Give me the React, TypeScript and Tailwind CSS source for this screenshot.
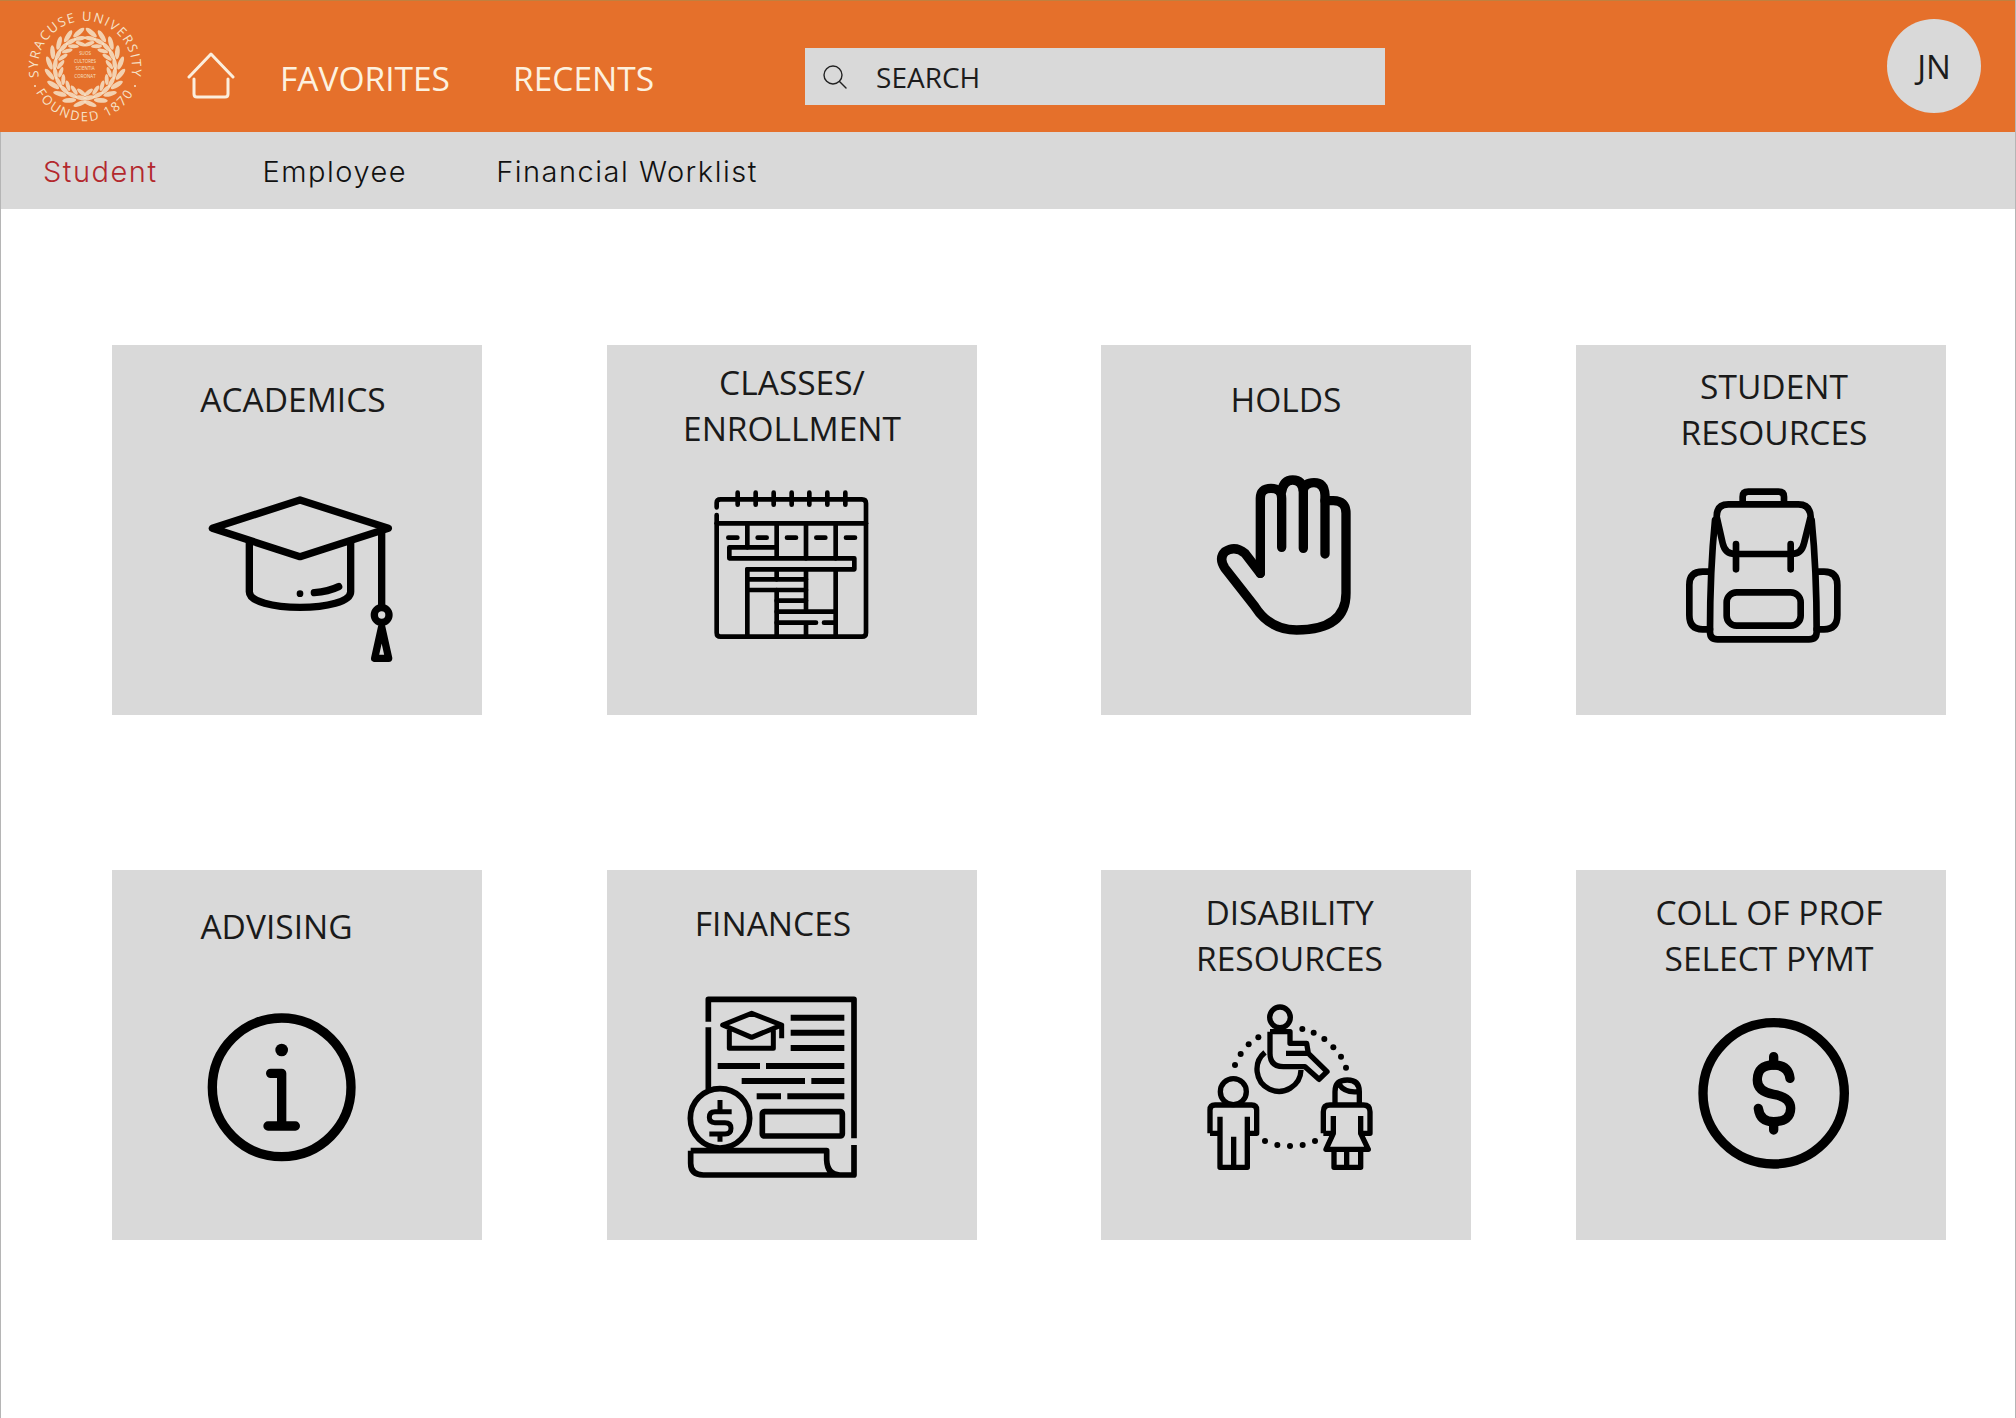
import React from 'react';

const sealLeaves = Array.from({ length: 10 }, (_, i) => 98 + i * 18);

const Seal: React.FC = () => (
  <svg width="160" height="131" viewBox="0 0 160 131" fill="none" className="shrink-0">
    <defs>
      <path id="sealTop" d="M 61.5,107.7 A 47,47 0 1 1 108.5,107.7" />
      <path id="sealBottom" d="M 30.5,77 A 56,56 0 0 0 139.5,77" />
    </defs>
    <text fontFamily="Open Sans, sans-serif" fontSize="13" fill="#f6e2c8" letterSpacing="1.5">
      <textPath href="#sealTop" startOffset="50%" textAnchor="middle">SYRACUSE UNIVERSITY</textPath>
    </text>
    <text fontFamily="Open Sans, sans-serif" fontSize="13" fill="#f6e2c8" letterSpacing="2">
      <textPath href="#sealBottom" startOffset="50%" textAnchor="middle">FOUNDED 1870</textPath>
    </text>
    <circle cx="35" cy="85" r="1" fill="#f6e2c8" />
    <circle cx="135" cy="85" r="1" fill="#f6e2c8" />
    {sealLeaves.map((a) => {
      const rad = (a * Math.PI) / 180;
      const x = 30 * Math.cos(rad);
      const y = 30 * Math.sin(rad);
      return (
        <g key={a} fill="#f6e2c8" fillOpacity="0.85">
          {[1, -1].map((side) => (
            <g key={side}>
              <ellipse cx={85 + side * x * 1.2} cy={67 + y * 1.2} rx="7" ry="2.4" transform={`rotate(${side * (a + 60)} ${85 + side * x * 1.2} ${67 + y * 1.2})`} />
              <ellipse cx={85 + side * x} cy={67 + y} rx="6" ry="2.2" transform={`rotate(${side * (a + 90)} ${85 + side * x} ${67 + y})`} />
              <ellipse cx={85 + side * x * 0.82} cy={67 + y * 0.82} rx="5.5" ry="2" transform={`rotate(${side * (a + 120)} ${85 + side * x * 0.82} ${67 + y * 0.82})`} />
            </g>
          ))}
        </g>
      );
    })}
    <g fontFamily="Open Sans, sans-serif" fontSize="4.5" fill="#f6e2c8" textAnchor="middle">
      <text x="85" y="54">SUOS</text>
      <text x="85" y="61.5">CULTORES</text>
      <text x="85" y="69">SCIENTIA</text>
      <text x="85" y="76.5">CORONAT</text>
    </g>
  </svg>
);

const HomeIcon: React.FC = () => (
  <svg width="48" height="47" viewBox="0 0 48 47" fill="none" stroke="#fbeedd" strokeWidth="3" strokeLinecap="round" strokeLinejoin="round">
    <path d="M 2,25 L 24,2 L 46,25" />
    <path d="M 7,27 V 42 Q 7,45 10,45 H 38 Q 41,45 41,42 V 27" />
  </svg>
);

const CapIcon: React.FC = () => (
  <svg width="240" height="210" viewBox="0 0 720 630" fill="none" stroke="#000" strokeWidth="22" strokeLinecap="round" strokeLinejoin="round">
    <path d="M 97,175 L 360,90 L 625,175 L 360,260 Z" />
    <path d="M 208,218 V 365 C 208,395 280,412 360,412 C 440,412 512,395 512,365 V 218" />
    <circle cx="360" cy="371" r="10" fill="#000" stroke="none" />
    <path d="M 403,368 Q 445,365 476,350" />
    <path d="M 605,175 V 410" />
    <circle cx="605" cy="435" r="22" />
    <path d="M 605,470 L 584,565 H 626 Z" />
  </svg>
);

const CalendarIcon: React.FC = () => (
  <svg width="210" height="180" viewBox="0 0 630 540" fill="none" stroke="#000" strokeWidth="14" strokeLinecap="round" strokeLinejoin="round">
    <path d="M 80,112 V 98 Q 80,88 92,88 H 516 Q 528,88 528,100 V 488 Q 528,500 516,500 H 92 Q 80,500 80,488 V 135" />
    <path d="M 143,68 V 104 M 197,68 V 104 M 251,68 V 104 M 305,68 V 104 M 358,68 V 104 M 412,68 V 104 M 466,68 V 104" />
    <path d="M 80,160 H 528" />
    <path d="M 172,160 V 232 M 172,298 V 500 M 260,160 V 232 M 260,298 V 328 M 260,360 V 500 M 348,160 V 265 M 348,298 V 425 M 348,465 V 500 M 437,160 V 265 M 437,298 V 500" />
    <path d="M 118,232 H 260 V 265 M 118,232 V 265 H 493 V 298 H 172" />
    <path d="M 172,328 H 348 M 172,360 H 348 M 260,392 H 348 M 260,425 H 437 M 260,458 H 378 M 402,458 H 437" />
    <path d="M 115,203 H 142 M 203,203 H 230 M 291,203 H 318 M 379,203 H 406 M 468,203 H 495" />
  </svg>
);

const HandIcon: React.FC = () => (
  <svg width="200" height="190" viewBox="0 0 600 570" fill="none" stroke="#000" strokeWidth="28" strokeLinecap="round" strokeLinejoin="round">
    <path d="M 211,340 V 115 Q 211,85 243,85 Q 275,85 275,115 V 262" />
    <path d="M 275,95 Q 280,60 308,60 Q 338,60 340,95 V 265" />
    <path d="M 340,90 Q 345,68 372,68 Q 403,68 405,105 V 282" />
    <path d="M 405,122 H 430 Q 468,122 468,160 V 400 Q 468,510 320,510 Q 240,510 195,440 L 105,325 Q 85,295 105,275 Q 135,255 165,280 L 211,340" />
  </svg>
);

const BackpackIcon: React.FC = () => (
  <svg width="200" height="180" viewBox="0 0 600 540" fill="none" stroke="#000" strokeWidth="20" strokeLinecap="round" strokeLinejoin="round">
    <path d="M 218,98 V 80 Q 218,65 235,65 H 325 Q 342,65 342,80 V 98" />
    <path d="M 140,140 Q 140,103 175,103 H 385 Q 420,103 422,140 L 402,220 Q 395,252 365,252 H 195 Q 165,252 158,220 Z" />
    <path d="M 135,150 Q 120,300 120,485 Q 120,508 143,508 H 417 Q 440,508 440,485 Q 440,300 425,150" />
    <path d="M 198,222 V 298 M 362,222 V 298" />
    <rect x="170" y="367" width="222" height="100" rx="30" />
    <path d="M 118,305 H 98 Q 58,305 58,345 V 435 Q 58,478 98,478 H 120" />
    <path d="M 442,305 H 462 Q 502,305 502,345 V 435 Q 502,478 462,478 H 440" />
  </svg>
);

const InfoIcon: React.FC = () => (
  <svg width="190" height="180" viewBox="0 0 570 540" fill="none" stroke="#000" strokeWidth="28" strokeLinecap="round" strokeLinejoin="round">
    <circle cx="275" cy="262" r="208" />
    <circle cx="275" cy="150" r="19" fill="#000" stroke="none" />
    <path d="M 242,220 H 275 V 378 M 234,378 H 316" />
  </svg>
);

const FinancesIcon: React.FC = () => (
  <svg width="210" height="200" viewBox="0 0 630 600" fill="none" stroke="#000" strokeWidth="17" strokeLinejoin="round">
    <path d="M 115,125 V 58 H 552 V 475 M 115,142 V 328" />
    <path d="M 62,512 H 470 V 540 Q 472,585 510,585 H 552 V 495 M 62,512 V 550 Q 62,585 100,585 H 510" />
    <circle cx="150" cy="415" r="89" />
    <path d="M 185,395 H 135 Q 118,395 118,412 Q 118,428 135,428 H 165 Q 183,428 183,445 Q 183,462 165,462 H 118 M 150,360 V 395 M 150,462 V 485" strokeWidth="15" />
    <path d="M 158,135 L 245,100 L 335,135 L 245,172 Z M 178,150 V 205 H 310 V 150 M 335,135 V 175" strokeWidth="15" />
    <path d="M 362,113 H 523 M 362,158 H 523 M 362,204 H 523 M 143,258 H 270 M 288,258 H 523 M 215,303 H 405 M 424,303 H 523 M 260,349 H 333 M 352,349 H 523" strokeWidth="18" />
    <rect x="277" y="395" width="240" height="73" rx="6" />
  </svg>
);

const dotPoints = [
  [135, 225], [152, 192], [176, 163], [205, 142], [337, 117], [371, 128], [403, 147], [430, 172], [453, 200], [468, 233],
  [225, 453], [262, 465], [300, 468], [338, 465], [375, 453],
];

const DisabilityIcon: React.FC = () => (
  <svg width="200" height="190" viewBox="0 0 600 570" fill="none" stroke="#000" strokeWidth="16" strokeLinejoin="round">
    <circle cx="270" cy="82" r="31" />
    <path d="M 240,125 H 300 V 160 H 350 L 355,190 H 288 M 240,125 V 190 Q 240,230 280,230 H 345 L 387,268 L 411,245 L 355,190" />
    <path d="M 225,187 A 66,66 0 1 0 333,240" />
    {dotPoints.map(([cx, cy]) => (
      <circle key={`${cx}-${cy}`} cx={cx} cy={cy} r="9" fill="#000" stroke="none" />
    ))}
    <circle cx="130" cy="305" r="39" />
    <path d="M 60,430 V 360 Q 60,345 75,345 H 185 Q 200,345 200,360 V 430 H 172 V 380 M 172,430 V 532 H 90 V 380 M 90,430 H 60 M 131,440 V 532" />
    <path d="M 435,345 V 305 Q 435,270 472,270 Q 508,270 508,305 V 345 M 447,283 Q 465,310 505,305" />
    <path d="M 400,430 V 365 Q 400,345 420,345 H 520 Q 540,345 540,365 V 430 H 512 V 378 M 430,378 V 430 H 400 M 430,430 L 408,478 H 535 L 512,430" />
    <path d="M 432,478 V 532 H 512 V 478 M 470,478 V 532" />
  </svg>
);

const DollarIcon: React.FC = () => (
  <svg width="190" height="180" viewBox="0 0 570 540" fill="none" stroke="#000" strokeWidth="28" strokeLinecap="round" strokeLinejoin="round">
    <circle cx="281" cy="280" r="212" />
    <path d="M 330,235 Q 325,195 281,195 Q 232,195 232,240 Q 232,275 281,283 Q 332,292 332,325 Q 332,365 281,365 Q 240,365 235,325" />
    <path d="M 281,170 V 195 M 281,365 V 390" />
  </svg>
);

type Tile = {
  lines: string[];
  titleClass: string;
  iconClass: string;
  Icon: React.FC;
};

const tiles: Tile[] = [
  { lines: ['ACADEMICS'], titleClass: 'pt-[31px] pr-[8px]', iconClass: 'mt-[15px] ml-[68px]', Icon: CapIcon },
  { lines: ['CLASSES/', 'ENROLLMENT'], titleClass: 'pt-[14px]', iconClass: 'mt-[15px] ml-[83px]', Icon: CalendarIcon },
  { lines: ['HOLDS'], titleClass: 'pt-[31px]', iconClass: 'mt-[5px] ml-[89px]', Icon: HandIcon },
  { lines: ['STUDENT', 'RESOURCES'], titleClass: 'pt-[18px] pl-[26px]', iconClass: 'mt-[15px] ml-[94px]', Icon: BackpackIcon },
  { lines: ['ADVISING'], titleClass: 'pt-[33px] pr-[41px]', iconClass: 'mt-[20px] ml-[78px]', Icon: InfoIcon },
  { lines: ['FINANCES'], titleClass: 'pt-[30px] pr-[38px]', iconClass: 'mt-0 ml-[63px]', Icon: FinancesIcon },
  { lines: ['DISABILITY', 'RESOURCES'], titleClass: 'pt-[19px] pl-[7px]', iconClass: 'mt-[10px] ml-[89px]', Icon: DisabilityIcon },
  { lines: ['COLL OF PROF', 'SELECT PYMT'], titleClass: 'pt-[19px] pl-[16px]', iconClass: 'mt-[20px] ml-[104px]', Icon: DollarIcon },
];

const App: React.FC = () => {
  return (
    <div className="min-h-[1418px] bg-white border-x border-x-[#b5b5b5] font-['Open_Sans',sans-serif]">
      <header className="flex h-[132px] items-start bg-[#e5702b] border-t border-t-[#c0803f] -ml-px">
        <Seal />
        <div className="mt-[51px] ml-[27px]">
          <HomeIcon />
        </div>
        <nav className="mt-[55px] ml-[45px] flex gap-[63px] text-[33.5px] leading-[45px] text-[#fdf1df]">
          <span>FAVORITES</span>
          <span>RECENTS</span>
        </nav>
        <div className="mt-[47px] ml-[151px] flex h-[57px] w-[580px] items-center bg-[#d9d9d9] text-[28px] text-[#1c1c1c]">
          <svg width="26" height="26" viewBox="0 0 26 26" fill="none" stroke="#222" strokeWidth="1.4" strokeLinecap="round" className="ml-[17px]">
            <circle cx="11" cy="11" r="9" />
            <path d="M 17.5,17.5 L 24,24" />
          </svg>
          <span className="ml-[28px]">SEARCH</span>
        </div>
        <div className="mt-[18px] ml-auto mr-[34px] flex h-[94px] w-[94px] items-center justify-center rounded-full bg-[#d9d9d9] pt-[2px] text-[33px] text-[#1c1c1c]">
          JN
        </div>
      </header>

      <div className="flex h-[77px] items-center bg-[#d9d9d9] pt-[2px] font-['Inter',sans-serif] text-[29px] font-light tracking-[1.5px] text-[#111]">
        <span className="ml-[42px] text-[#b3282d]">Student</span>
        <span className="ml-[105px]">Employee</span>
        <span className="ml-[89px]">Financial Worklist</span>
      </div>

      <main className="grid grid-cols-[495px_494px_475px_370px] gap-y-[155px] pt-[136px] pl-[111px]">
        {tiles.map(({ lines, titleClass, iconClass, Icon }) => (
          <div key={lines[0]} className="flex h-[370px] w-[370px] flex-col overflow-hidden bg-[#d9d9d9]">
            <div className={`h-[110px] shrink-0 text-center text-[33.5px] leading-[46px] text-[#1a1a1a] ${titleClass}`}>
              {lines.map((line) => (
                <div key={line}>{line}</div>
              ))}
            </div>
            <div className={iconClass}>
              <Icon />
            </div>
          </div>
        ))}
      </main>
    </div>
  );
};

export default App;
